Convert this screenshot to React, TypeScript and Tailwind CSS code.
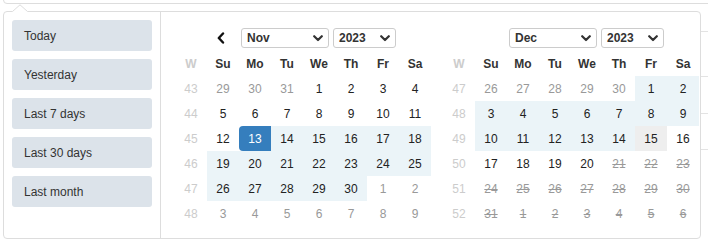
import React from "react";

type Cell = { d: number; off?: boolean; range?: boolean; start?: boolean; hover?: boolean; disabled?: boolean };
type Week = { w: number; days: Cell[] };

const nov: Week[] = [
  { w: 43, days: [{ d: 29, off: true }, { d: 30, off: true }, { d: 31, off: true }, { d: 1 }, { d: 2 }, { d: 3 }, { d: 4 }] },
  { w: 44, days: [5, 6, 7, 8, 9, 10, 11].map((d) => ({ d })) },
  { w: 45, days: [{ d: 12 }, { d: 13, start: true }, ...[14, 15, 16, 17, 18].map((d) => ({ d, range: true }))] },
  { w: 46, days: [19, 20, 21, 22, 23, 24, 25].map((d) => ({ d, range: true })) },
  { w: 47, days: [...[26, 27, 28, 29, 30].map((d) => ({ d, range: true })), { d: 1, off: true }, { d: 2, off: true }] },
  { w: 48, days: [3, 4, 5, 6, 7, 8, 9].map((d) => ({ d, off: true })) },
];

const dec: Week[] = [
  { w: 47, days: [...[26, 27, 28, 29, 30].map((d) => ({ d, off: true })), { d: 1, range: true }, { d: 2, range: true }] },
  { w: 48, days: [3, 4, 5, 6, 7, 8, 9].map((d) => ({ d, range: true })) },
  { w: 49, days: [...[10, 11, 12, 13, 14].map((d) => ({ d, range: true })), { d: 15, hover: true }, { d: 16 }] },
  { w: 50, days: [{ d: 17 }, { d: 18 }, { d: 19 }, { d: 20 }, { d: 21, disabled: true }, { d: 22, disabled: true }, { d: 23, disabled: true }] },
  { w: 51, days: [24, 25, 26, 27, 28, 29, 30].map((d) => ({ d, disabled: true })) },
  { w: 52, days: [31, 1, 2, 3, 4, 5, 6].map((d) => ({ d, disabled: true })) },
];

const Chevron = () => (
  <svg width="10" height="7" viewBox="0 0 10 7" className="shrink-0">
    <path d="M1.2 1.2 L5 5 L8.8 1.2" fill="none" stroke="#333" strokeWidth="2.2" strokeLinecap="round" strokeLinejoin="round" />
  </svg>
);

function Select({ label, w }: { label: string; w: string }) {
  return (
    <div className={`${w} h-[20px] border border-[#ccc] rounded-[3px] flex items-center justify-between pl-[5px] pr-[5px] text-[12px] font-bold text-[#333] bg-white`}>
      <span>{label}</span>
      <Chevron />
    </div>
  );
}

function DayCell({ c }: { c: Cell }) {
  let cls = "h-[25px] flex items-center justify-center ";
  if (c.start) cls += "bg-[#357ebd] text-white rounded-l-[4px]";
  else if (c.range) cls += "bg-[#ebf4f8] text-[#222]";
  else if (c.hover) cls += "bg-[#eee] text-[#222]";
  else if (c.disabled) cls += "text-[#999] line-through";
  else if (c.off) cls += "text-[#999]";
  else cls += "text-[#222]";
  return <div className={cls}>{c.d}</div>;
}

function Calendar({ month, weeks, prev }: { month: string; weeks: Week[]; prev: boolean }) {
  return (
    <div className="w-[256px] flex flex-col">
      <div className="h-[20px] mb-[3px] flex justify-center pl-[4px]">
        <div className="w-[27px] flex items-center pl-[3px]">
          {prev && (
            <svg width="8" height="12" viewBox="0 0 8 12">
              <path d="M6 1.5 L1.8 6 L6 10.5" fill="none" stroke="#111" strokeWidth="2.4" strokeLinecap="round" strokeLinejoin="round" />
            </svg>
          )}
        </div>
        <Select label={month} w="w-[88px]" />
        <div className="w-[4px]" />
        <Select label="2023" w="w-[63px]" />
      </div>
      <div className="grid grid-cols-8 h-[25px] items-center text-center text-[12px] font-bold text-[#333]">
        <div className="text-[#ccc]">W</div>
        {["Su", "Mo", "Tu", "We", "Th", "Fr", "Sa"].map((d) => (
          <div key={d}>{d}</div>
        ))}
      </div>
      {weeks.map((wk) => (
        <div key={wk.w} className="grid grid-cols-8 text-[12px]">
          <div className="h-[25px] flex items-center justify-center text-[#ccc]">{wk.w}</div>
          {wk.days.map((c, i) => (
            <DayCell key={i} c={c} />
          ))}
        </div>
      ))}
    </div>
  );
}

export default function App() {
  const presets = ["Today", "Yesterday", "Last 7 days", "Last 30 days", "Last month"];
  return (
    <div className="relative w-[708px] h-[246px] bg-white overflow-hidden font-['Liberation_Sans',Arial,sans-serif]">
      {/* background content */}
      <div className="absolute left-[3px] top-[-20px] w-[720px] h-[24px] border border-[#ddd] rounded-[4px]" />
      <div className="absolute left-[700px] top-[31px] w-[20px] h-0 border-t border-[#e3e3e3]" />
      <div className="absolute left-[700px] top-[76px] w-[20px] h-0 border-t border-[#e3e3e3]" />
      <div className="absolute left-[700px] top-[113px] w-[20px] h-0 border-t border-[#e3e3e3]" />
      <div className="absolute left-[700px] top-[149px] w-[20px] h-0 border-t border-[#e3e3e3]" />

      {/* popup */}
      <div className="absolute left-[3px] top-[11px] w-[698px] h-[228px] border border-[#ddd] rounded-[4px] bg-white flex">
        <div className="w-[157px] shrink-0 border-r border-[#ddd] flex flex-col gap-[8px] pt-[8px] pl-[8px]">
          {presets.map((p) => (
            <div key={p} className="w-[140px] h-[31px] rounded-[3px] bg-[#dce3ea] text-[12px] text-[#333] flex items-center pl-[12px]">
              {p}
            </div>
          ))}
        </div>
        <div className="flex gap-[12px] pl-[14px] pt-[16px]">
          <Calendar month="Nov" weeks={nov} prev />
          <Calendar month="Dec" weeks={dec} prev={false} />
        </div>
      </div>
      <svg className="absolute left-[12px] top-[4px]" width="16" height="8" viewBox="0 0 16 8">
        <polygon points="0,8 8,0.5 16,8" fill="white" />
        <polyline points="0.5,7.5 8,0.8 15.5,7.5" fill="none" stroke="#ddd" strokeWidth="1" />
      </svg>
    </div>
  );
}
